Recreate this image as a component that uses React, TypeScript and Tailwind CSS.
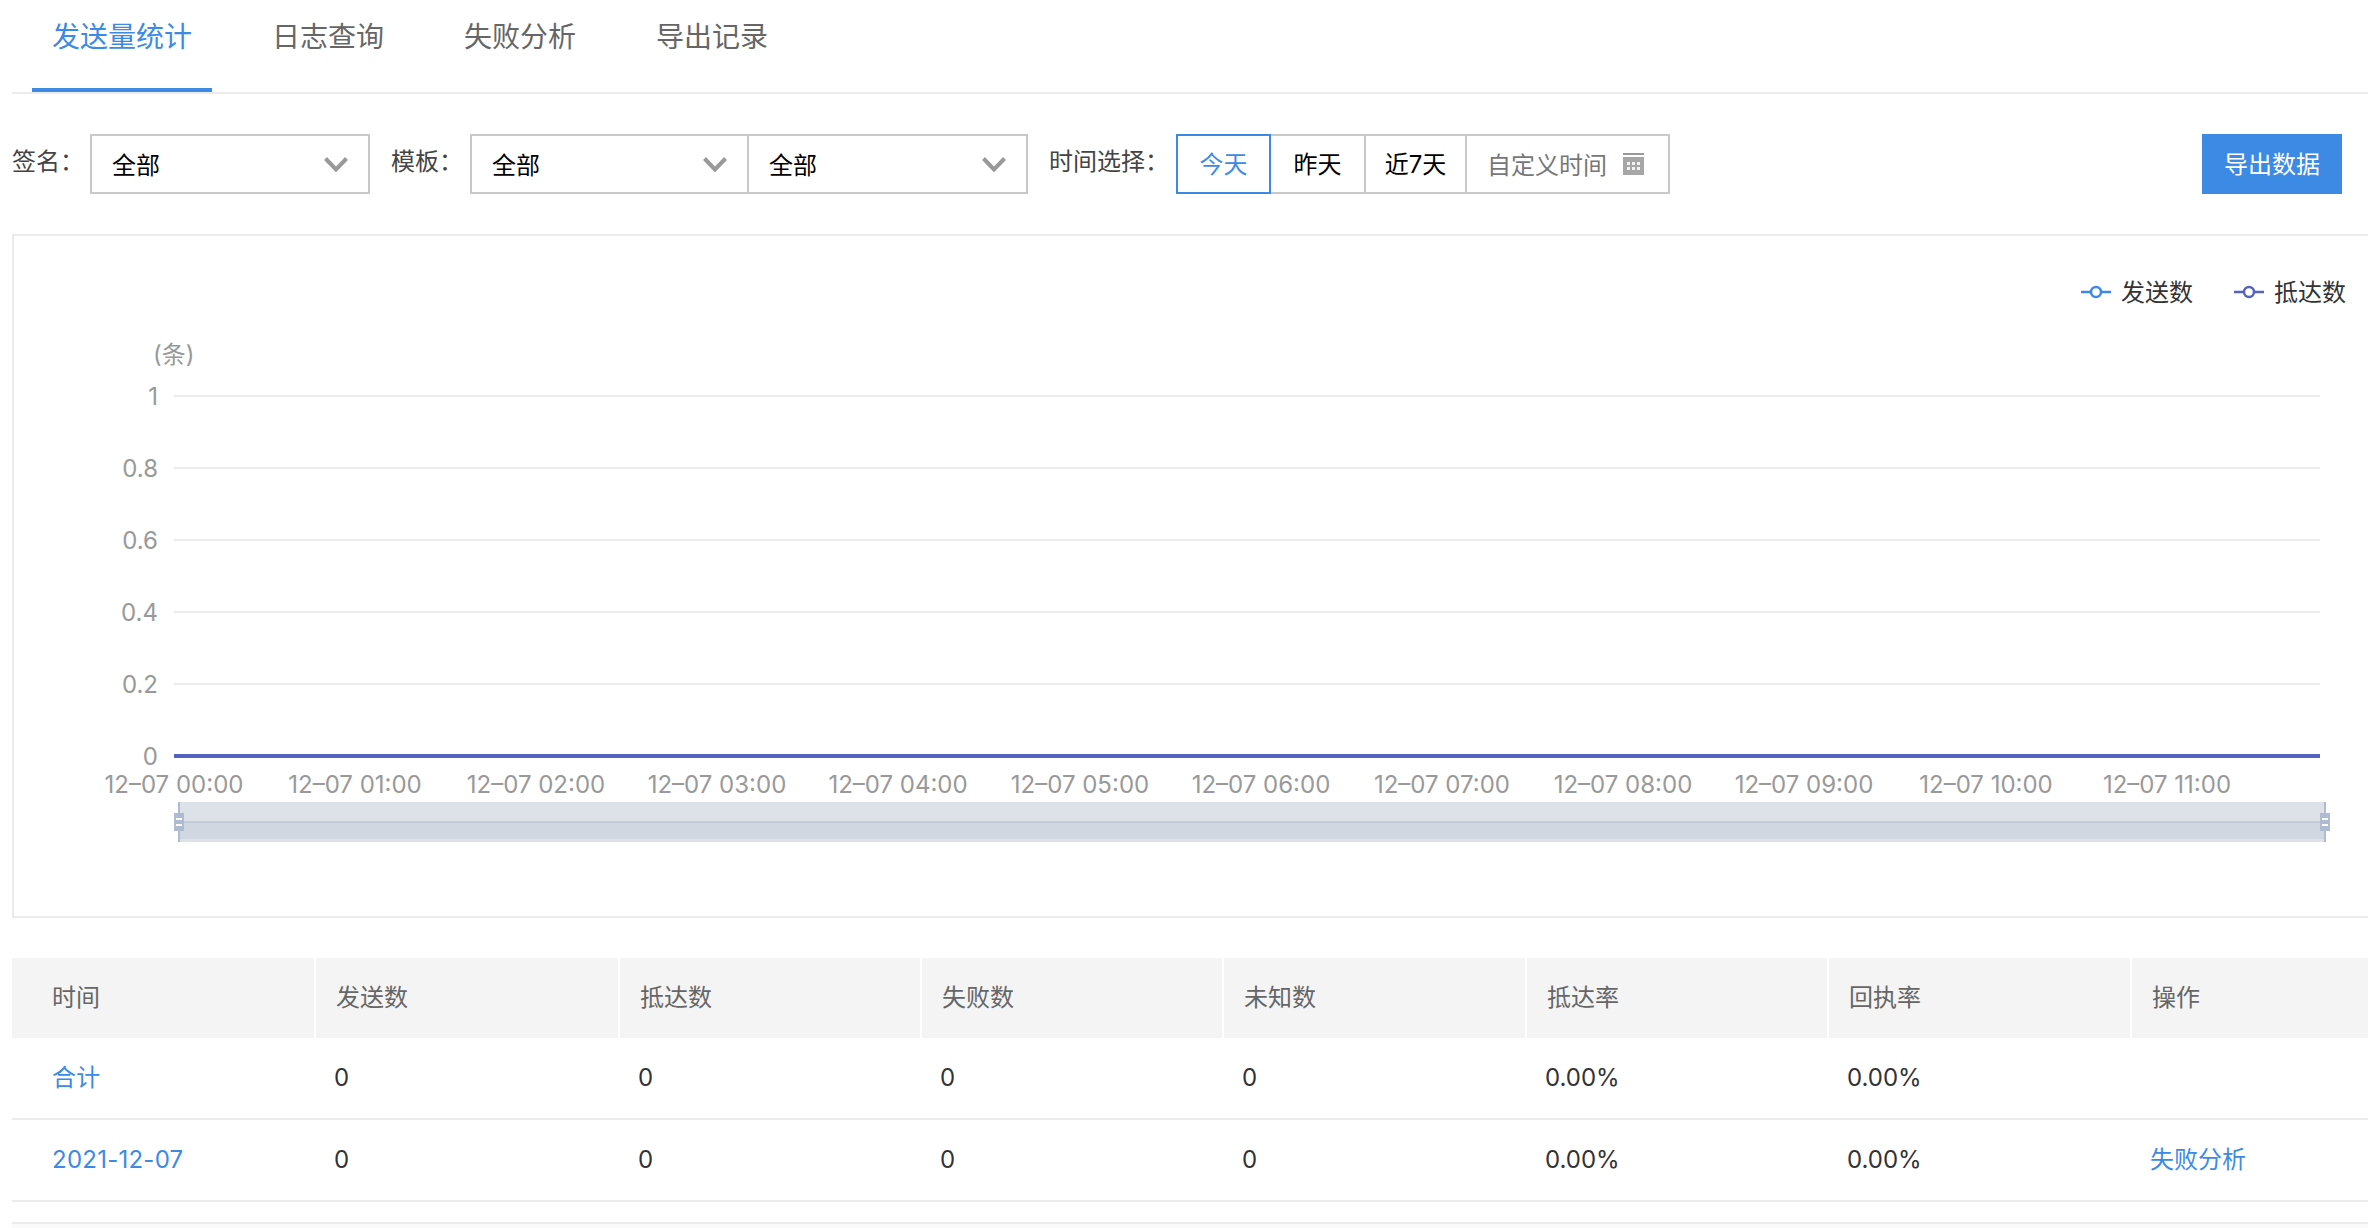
const SANS = "font-['Inter','Noto_Sans_CJK_SC',sans-serif]";

function Chevron() {
  return (
    <svg width="24" height="16" viewBox="0 0 24 16" className="shrink-0">
      <path d="M1.5 2.5 12 13.5 22.5 2.5" fill="none" stroke="#999999" strokeWidth="4" />
    </svg>
  );
}

function Select({ width, className = "" }: { width: string; className?: string }) {
  return (
    <div className={`${width} flex items-center justify-between pl-[20px] pr-[20px] bg-white text-[24px] text-black ${className}`}>
      <span className="translate-y-[2px]">全部</span>
      <Chevron />
    </div>
  );
}

function Tabs() {
  const items = ["发送量统计", "日志查询", "失败分析", "导出记录"];
  return (
    <div className="ml-[12px] h-[94px] border-b-2 border-[#ebebeb] flex pl-[20px] pt-[14px]">
      {items.map((t, i) => (
        <div
          key={t}
          className={`h-[78px] text-[28px] leading-[46px] ${i === 0 ? "w-[180px] pl-[20px] border-b-4 border-[#3d8ae5] text-[#3d8ae5] mr-[60px]" : "text-[#666666] mr-[80px]"}`}
        >
          {t}
        </div>
      ))}
    </div>
  );
}

function Calendar() {
  return (
    <svg width="21" height="22" viewBox="0 0 21 22" className="shrink-0">
      <rect x="0" y="0" width="21" height="2" fill="#999999" />
      <rect x="0" y="4" width="21" height="18" fill="#a6a6a6" />
      <g fill="#ffffff" fillOpacity="0.85">
        {[4, 9, 14].flatMap((x) => [9, 14].map((y) => <rect key={`${x}-${y}`} x={x} y={y} width="3" height="3" />))}
      </g>
    </svg>
  );
}

function Filters() {
  return (
    <div className="h-[138px] pl-[12px] pr-[26px] flex items-start pt-[40px]">
      <span className="w-[78px] leading-[56px] text-[24px] text-[#444444]">签名：</span>
      <Select width="w-[280px]" className="h-[60px] border-2 border-[#c8c8c8]" />
      <span className="ml-[21px] w-[79px] leading-[56px] text-[24px] text-[#444444]">模板：</span>
      <div className="w-[558px] h-[60px] flex border-2 border-[#c8c8c8] items-center">
        <Select width="w-[277px]" className="border-r-2 border-[#c8c8c8] h-[56px]" />
        <Select width="w-[277px]" className="h-[56px]" />
      </div>
      <span className="ml-[21px] w-[127px] leading-[56px] text-[24px] text-[#444444]">时间选择：</span>
      <div className="h-[60px] flex text-[24px]">
        <div className="w-[95px] border-2 border-[#3d8ae5] text-[#3d8ae5] flex items-center justify-center pt-[2px]">今天</div>
        <div className="w-[95px] border-y-2 border-r-2 border-[#c8c8c8] text-black flex items-center justify-center pt-[2px]">昨天</div>
        <div className="w-[101px] border-y-2 border-r-2 border-[#c8c8c8] text-black flex items-center justify-center pt-[2px]">近7天</div>
        <div className="w-[203px] border-y-2 border-r-2 border-[#c8c8c8] text-[#777777] flex items-center gap-[16px] pl-[20px]">
          <span className="translate-y-[2px]">自定义时间</span>
          <Calendar />
        </div>
      </div>
      <button className="ml-auto w-[140px] h-[60px] pt-[2px] bg-[#3d8ae5] text-white text-[24px]">导出数据</button>
    </div>
  );
}

const Y_LABELS = [
  ["1", 396],
  ["0.8", 468],
  ["0.6", 540],
  ["0.4", 612],
  ["0.2", 684],
];
const X_LABELS = ["00", "01", "02", "03", "04", "05", "06", "07", "08", "09", "10", "11"];
const X_POS = [174, 355, 536, 717, 898, 1080, 1261, 1442, 1623, 1804, 1986, 2167];
const FONT = "Inter, 'Noto Sans CJK SC', sans-serif";

function Marker({ x, color }: { x: number; color: string }) {
  return (
    <g>
      <line x1={x} x2={x + 30} y1={292} y2={292} stroke={color} strokeWidth="2.5" />
      <circle cx={x + 15} cy={292} r="5" fill="#ffffff" stroke={color} strokeWidth="2.5" />
    </g>
  );
}

function Chart() {
  return (
    <svg width="2354" height="680" viewBox="14 236 2354 680" className="block" fontFamily={FONT}>
      <Marker x={2081} color="#3d8ae5" />
      <text x={2121} y={301} fontSize="24" fill="#333333">发送数</text>
      <Marker x={2234} color="#5463c1" />
      <text x={2274} y={301} fontSize="24" fill="#333333">抵达数</text>
      <text x={153} y={363} fontSize="24" fill="#999999">(条)</text>
      {Y_LABELS.map(([t, y]) => (
        <g key={t}>
          <line x1={174} x2={2320} y1={Number(y)} y2={Number(y)} stroke="#ebebeb" strokeWidth="2" />
          <text x={158} y={Number(y) + 9} fontSize="24" textAnchor="end" fill="#999999">{t}</text>
        </g>
      ))}
      <text x={158} y={765} fontSize="24" textAnchor="end" fill="#999999">0</text>
      <rect x={174} y={754} width={2146} height={4} fill="#5463c1" />
      {X_LABELS.map((h, i) => (
        <text key={h} x={X_POS[i]} y={793} fontSize="24" textAnchor="middle" fill="#999999">{`12–07 ${h}:00`}</text>
      ))}
      <rect x={178} y={802} width={2148} height={20} fill="#dde1e8" />
      <rect x={178} y={822} width={2148} height={17} fill="#d0d7e1" />
      <rect x={178} y={839} width={2148} height={3} fill="#dfe1e5" />
      <line x1={180} x2={2324} y1={822} y2={822} stroke="#bcc4d1" strokeWidth="1.5" />
      {[178, 2324].map((x) => (
        <g key={x}>
          <rect x={x} y={802} width={2} height={40} fill="#aebbd0" />
          <rect x={x - 4} y={813} width={10} height={18} fill="#aebbd0" />
          <rect x={x - 2} y={818} width={6} height={2} fill="#ffffff" />
          <rect x={x - 2} y={824} width={6} height={2} fill="#ffffff" />
        </g>
      ))}
    </svg>
  );
}

const HEAD = ["时间", "发送数", "抵达数", "失败数", "未知数", "抵达率", "回执率", "操作"];
const ROWS = [
  ["合计", "0", "0", "0", "0", "0.00%", "0.00%", ""],
  ["2021-12-07", "0", "0", "0", "0", "0.00%", "0.00%", "失败分析"],
];
const GRID = "grid grid-cols-[304px_304px_302px_302px_303px_302px_303px_1fr]";

function Table() {
  return (
    <div className="ml-[12px] mt-[40px]">
      <div className={`${GRID} h-[80px] text-[24px] text-[#666666]`}>
        {HEAD.map((h, i) => (
          <div key={h} className={`bg-[#f4f4f4] flex items-center ${i === 0 ? "pl-[40px]" : "pl-[20px]"} ${i < 7 ? "border-r-2 border-white" : ""}`}>{h}</div>
        ))}
      </div>
      {ROWS.map((r) => (
        <div key={r[0]} className={`${GRID} h-[82px] border-b-2 border-[#ebebeb] text-[24px] text-[#333333]`}>
          {r.map((c, i) => (
            <div key={i} className={`flex items-center ${i === 0 ? "pl-[40px] text-[#3d8ae5] tracking-[0.25px]" : i === 7 ? "pl-[18px] text-[#3d8ae5]" : "pl-[18px]"}`}>{c}</div>
          ))}
        </div>
      ))}
      <div className="mt-[20px] h-[6px] border-t-2 border-[#ebebeb] bg-[#fafafa]" />
    </div>
  );
}

export default function App() {
  return (
    <div className={`w-[2368px] h-[1228px] overflow-hidden bg-white ${SANS}`}>
      <div className="h-0 shadow-[0_0_8px_rgba(0,0,0,0.12)]" />
      <Tabs />
      <Filters />
      <div className="ml-[12px] h-[684px] border-y-2 border-l-2 border-[#ebebeb] mt-[2px]">
        <Chart />
      </div>
      <Table />
    </div>
  );
}
